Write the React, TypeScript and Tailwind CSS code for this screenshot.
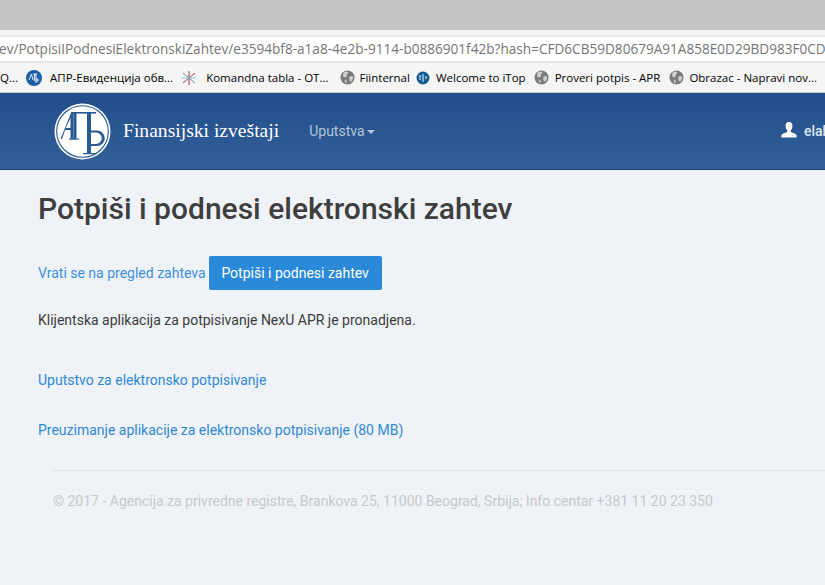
import React from "react";

function GlobeIcon() {
  return (
    <svg width="15" height="15" viewBox="0 0 16 16" className="shrink-0">
      <circle cx="8" cy="8" r="7.5" fill="#7b7b7b" />
      <path d="M4 2.5 L8 1.5 L9 3.5 L7 5 L7.5 7 L5 8 L3 6 Z M10 7 L13.5 6.5 L14 9 L12 12.5 L10 11 Z M5 10 L7 11 L7 14 L5.5 13 Z" fill="#d0d0d0" />
    </svg>
  );
}

function AprSmallIcon() {
  return (
    <svg width="16" height="16" viewBox="0 0 16 16" className="shrink-0">
      <circle cx="8" cy="8" r="8" fill="#1d5fa8" />
      <path d="M3 10 L5.5 4 L7 10 M7.5 4 H11 M8.5 4 V11 M10 4 V13 M10 9 H12 V11 H10" stroke="#fff" strokeWidth="0.9" fill="none" />
    </svg>
  );
}

function StarIcon() {
  return (
    <svg width="16" height="16" viewBox="0 0 16 16" className="shrink-0">
      <path d="M8 1 L8 15" stroke="#a33b4a" strokeWidth="1" />
      <path d="M2 3 L14 13" stroke="#5a8ea8" strokeWidth="1" />
      <path d="M14 3 L2 13" stroke="#b2404f" strokeWidth="1" />
      <path d="M1 8 L15 8" stroke="#8cc0d0" strokeWidth="1" />
    </svg>
  );
}

function TopIcon() {
  return (
    <svg width="14" height="14" viewBox="0 0 14 14" className="shrink-0">
      <circle cx="7" cy="7" r="6.5" fill="#125c94" />
      <path d="M4 4 V9 M7 3 V11 M10 5 V8" stroke="#dfeaf3" strokeWidth="1.1" />
    </svg>
  );
}

function AprLogo() {
  return (
    <svg width="57" height="57" viewBox="0 0 57 57" className="shrink-0">
      <circle cx="28.5" cy="28.5" r="28" fill="#fff" />
      <circle cx="28.5" cy="28.5" r="25.8" fill="none" stroke="#2a5a94" strokeWidth="1.1" />
      <g fill="#2a5a94">
        <path d="M4.5 36 L6.5 36 L17 10 L19.5 10 L19.5 36 L16.5 36 L16.5 27 L11 27 L8 36 Z M11.8 25 L16.5 25 L16.5 15 Z" />
        <rect x="15" y="35.5" width="10" height="1.2" />
        <rect x="17" y="9" width="25" height="1.6" />
        <rect x="19.5" y="10" width="3" height="26" />
        <rect x="33" y="10" width="4" height="40.5" />
        <rect x="29" y="50" width="12" height="1.2" />
        <path d="M37 27.5 H43 A7.5 7.5 0 0 1 43 43 H37 V41 H42 A5 5 0 0 0 42 29.5 H37 Z" />
      </g>
    </svg>
  );
}

const bookmarks = [
  { icon: <AprSmallIcon />, label: "АПР-Евиденција обв...", cls: "gap-[8px] mr-[8px]" },
  { icon: <StarIcon />, label: "Komandna tabla - OT...", cls: "gap-[9px] mr-[11px]" },
  { icon: <GlobeIcon />, label: "Fiinternal", cls: "gap-[5px] mr-[6px]" },
  { icon: <TopIcon />, label: "Welcome to iTop", cls: "gap-[6px] mr-[8px]" },
  { icon: <GlobeIcon />, label: "Proveri potpis - APR", cls: "gap-[6px] mr-[9px]" },
  { icon: <GlobeIcon />, label: "Obrazac - Napravi nov...", cls: "gap-[5px]" },
];

export default function App() {
  return (
    <div className="w-[825px] h-[585px] overflow-hidden flex flex-col bg-[#eff3f7] font-['Roboto',sans-serif]">
      {/* browser chrome */}
      <div className="h-[30px] shrink-0 bg-[#c4c4c4]" />
      <div className="h-[5px] shrink-0 bg-[#f5f5f5]" />
      <div className="h-[28px] shrink-0 bg-white border-y-2 border-[#e8e8e8] flex items-center whitespace-nowrap overflow-hidden font-['Open_Sans',sans-serif] text-[13.6px] text-[#757575]">
        <span className="-ml-[1px]">ev/PotpisiIPodnesiElektronskiZahtev/e3594bf8-a1a8-4e2b-9114-b0886901f42b?hash=CFD6CB59D80679A91A858E0D29BD983F0CD</span>
      </div>
      <div className="h-[30px] shrink-0 bg-[#f5f5f5] border-b border-[#c9c9c9] flex items-center whitespace-nowrap overflow-hidden font-['Open_Sans',sans-serif] text-[11.5px] text-black">
        <span className="mr-[8px]">Q...</span>
        {bookmarks.map((b) => (
          <span key={b.label} className={`flex items-center ${b.cls}`}>
            {b.icon}
            <span>{b.label}</span>
          </span>
        ))}
      </div>

      {/* site header */}
      <header className="h-[77px] shrink-0 bg-gradient-to-b from-[#1f4e8b] to-[#346098] border-b border-[#1d3f70] flex items-center pl-[54px] pr-0 overflow-hidden whitespace-nowrap">
        <AprLogo />
        <span className="ml-[12px] font-['Liberation_Serif',serif] text-[19.6px] text-white">Finansijski izveštaji</span>
        <span className="ml-[30px] flex items-center text-[14px] text-[#b5c3d6]">
          Uputstva
          <span className="ml-[2px] mt-[2px] w-0 h-0 border-x-[4px] border-x-transparent border-t-[4px] border-t-[#b5c3d6]" />
        </span>
        <svg width="16" height="16" viewBox="0 0 16 16" className="ml-auto mr-[7px] mb-[2px] shrink-0">
          <path d="M8 0 C10.6 0 11.6 2 11.4 4.4 C11.3 6 10.6 7.4 9.8 8.2 V10 C11.5 10.9 15.2 11.6 15.6 13.4 V15.4 H0.4 V13.4 C0.8 11.6 4.5 10.9 6.2 10 V8.2 C5.4 7.4 4.7 6 4.6 4.4 C4.4 2 5.4 0 8 0 Z" fill="#fff" />
        </svg>
        <span className="w-[21px] overflow-hidden text-[14px] font-medium text-[#dfe6ef]">elab</span>
      </header>

      {/* page body */}
      <main className="flex-1 pl-[38px] text-[14px] text-[#3d3d3d]">
        <h1 className="mt-[21px] text-[30px] leading-[36px] font-medium text-[#3e3e3e] whitespace-nowrap">Potpiši i podnesi elektronski zahtev</h1>
        <div className="mt-[29px] flex items-center whitespace-nowrap">
          <a className="text-[#3d8fdc]">Vrati se na pregled zahteva</a>
          <button className="ml-[3px] w-[173px] h-[34px] bg-[#2a89d8] text-white rounded-[2px] text-[14px]">Potpiši i podnesi zahtev</button>
        </div>
        <p className="mt-[20px] leading-[20px] text-[#3b3b3b]">Klijentska aplikacija za potpisivanje NexU APR je pronadjena.</p>
        <p className="mt-[40px] leading-[20px]"><a className="text-[#2f88d6]">Uputstvo za elektronsko potpisivanje</a></p>
        <p className="mt-[30px] leading-[20px]"><a className="text-[#2f88d6]">Preuzimanje aplikacije za elektronsko potpisivanje (80 MB)</a></p>
        <footer className="ml-[15px] mt-[30px] border-t border-[#dfe2e5] pt-[20px] leading-[20px] text-[#c6c9cc] whitespace-nowrap">
          © 2017 - Agencija za privredne registre, Brankova 25, 11000 Beograd, Srbija; Info centar +381 11 20 23 350
        </footer>
      </main>
    </div>
  );
}
